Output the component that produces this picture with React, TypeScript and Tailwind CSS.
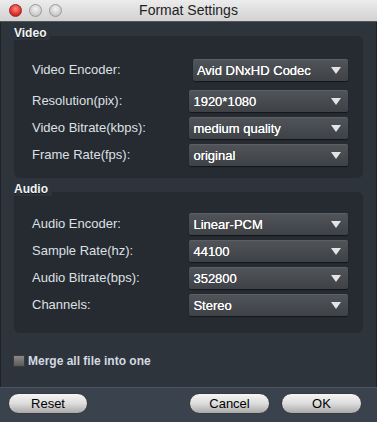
import React from "react";

type Row = { label: string; value: string; shift?: boolean };

const videoRows: Row[] = [
  { label: "Video Encoder:", value: "Avid DNxHD Codec", shift: true },
  { label: "Resolution(pix):", value: "1920*1080" },
  { label: "Video Bitrate(kbps):", value: "medium quality" },
  { label: "Frame Rate(fps):", value: "original" },
];

const audioRows: Row[] = [
  { label: "Audio Encoder:", value: "Linear-PCM" },
  { label: "Sample Rate(hz):", value: "44100" },
  { label: "Audio Bitrate(bps):", value: "352800" },
  { label: "Channels:", value: "Stereo" },
];

function Light({ red }: { red?: boolean }) {
  return (
    <span
      className={`w-[13px] h-[13px] rounded-full border ${
        red
          ? "bg-[radial-gradient(circle_at_50%_35%,#ff8a80,#e0302a_60%,#a8140f)] border-[#9a2a26]"
          : "bg-[radial-gradient(circle_at_50%_35%,#f4f4f4,#cfcfcf_60%,#b5b5b5)] border-[#9a9a9a]"
      }`}
    />
  );
}

function Select({ value, shift }: { value: string; shift?: boolean }) {
  return (
    <div
      className={`h-[22px] flex items-center justify-between rounded-[2px] bg-gradient-to-b from-[#505358] to-[#3e4146] border-t border-[#5c5f64] shadow-[0_1px_1px_rgba(0,0,0,0.5)] pl-[4px] pr-[7px] ${
        shift ? "w-[157px] ml-[3px]" : "w-[161px]"
      }`}
    >
      <span className="text-[13px] text-white [text-shadow:0_0_0.4px_#fff]">{value}</span>
      <svg width="10" height="7" viewBox="0 0 10 7">
        <path d="M0 0 H10 L5 7 Z" fill="#e4e4e4" />
      </svg>
    </div>
  );
}

function Panel({ rows, pt, pb, firstGap }: { rows: Row[]; pt: string; pb: string; firstGap: string }) {
  return (
    <div className={`rounded-[6px] bg-[#262a31] pl-[18px] pr-[15px] ${pt} ${pb} flex flex-col`}>
      {rows.map((r, i) => (
        <div key={r.label} className={`flex items-center ${i === 0 ? "" : i === 1 ? firstGap : "mt-[5px]"}`}>
          <span className="w-[160px] text-[13px] text-[#dde0e4]">{r.label}</span>
          <Select value={r.value} shift={r.shift} />
        </div>
      ))}
    </div>
  );
}

function SectionLabel({ text }: { text: string }) {
  return (
    <div className="relative z-10 w-fit bg-[#2e343c] pr-[4px] text-[12px] leading-[14px] font-bold text-[#f2f4f6] [text-shadow:0_1px_0_rgba(0,0,0,0.6)]">
      {text}
    </div>
  );
}

function Button({ text, w }: { text: string; w: string }) {
  return (
    <button className={`${w} h-[21px] rounded-full border border-[#3a3a3a] bg-gradient-to-b from-[#f6f6f6] via-[#dcdcdc] to-[#a9a9a9] text-[13px] text-black flex items-center justify-center`}>
      {text}
    </button>
  );
}

export default function App() {
  return (
    <div className="w-[377px] h-[422px] flex flex-col overflow-hidden bg-[#2e343c] font-['Liberation_Sans',Arial,sans-serif]">
      {/* title bar */}
      <div className="h-[22px] shrink-0 relative flex items-center bg-gradient-to-b from-[#ececec] to-[#d2d2d2] border-b border-[#555]">
        <div className="flex items-center gap-[7px] pl-[9px]">
          <Light red />
          <Light />
          <Light />
        </div>
        <span className="absolute inset-0 flex items-center justify-center text-[14px] text-[#222]">Format Settings</span>
      </div>

      <div className="flex-1 flex flex-col px-[13px] pt-[4px] border-x border-[#1f2329]">
        <SectionLabel text="Video" />
        <div className="-mt-[4px]">
          <Panel rows={videoRows} pt="pt-[23px]" pb="pb-[12px]" firstGap="mt-[9px]" />
        </div>
        <div className="mt-[4px]">
          <SectionLabel text="Audio" />
        </div>
        <div className="-mt-[4px]">
          <Panel rows={audioRows} pt="pt-[21px]" pb="pb-[17px]" firstGap="mt-[5px]" />
        </div>
        <div className="flex items-center mt-[19px] -ml-[1px] gap-[3px]">
          <span className="w-[12px] h-[12px] border border-[#3b3b3b] bg-gradient-to-b from-[#8a8a8a] to-[#5a5a5a]" />
          <span className="text-[12px] font-bold text-[#d3d9e2]">Merge all file into one</span>
        </div>
      </div>

      <div className="h-[35px] shrink-0 flex items-start pt-[5px] px-[8px] bg-[#3a424d] border-t border-[#4b5460]">
        <Button text="Reset" w="w-[80px]" />
        <div className="flex-1" />
        <Button text="Cancel" w="w-[81px]" />
        <div className="w-[11px]" />
        <Button text="OK" w="w-[81px]" />
        <div className="w-[7px]" />
      </div>
    </div>
  );
}
